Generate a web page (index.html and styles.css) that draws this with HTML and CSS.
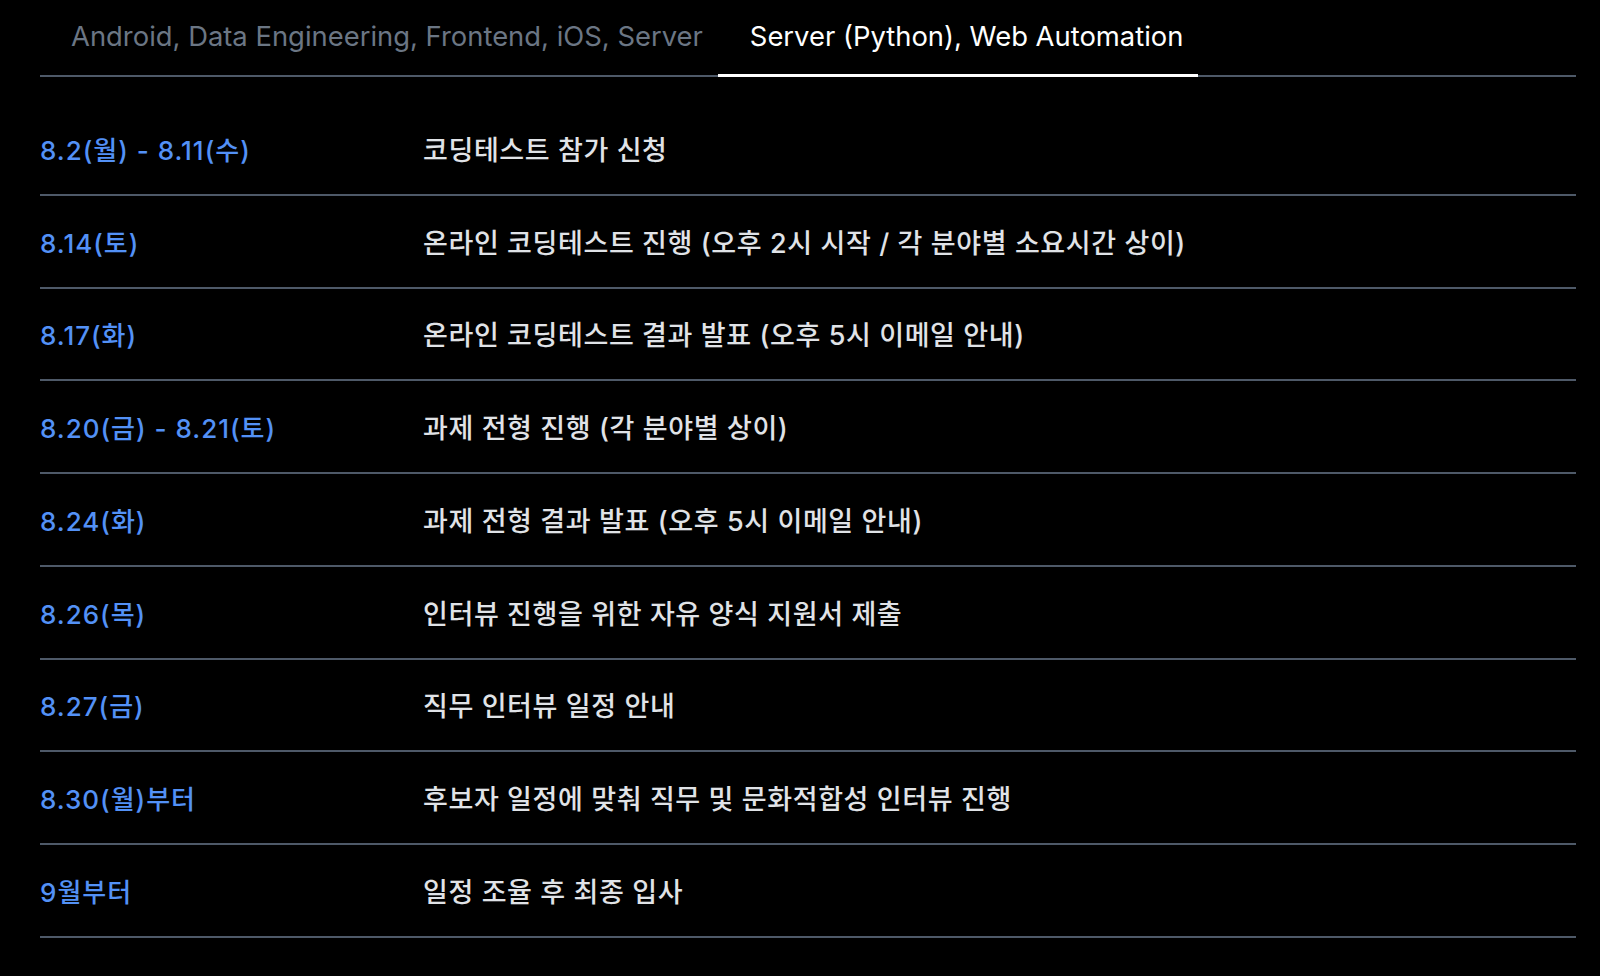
FILE: index.html
```html
<!DOCTYPE html>
<html lang="ko">
<head>
<meta charset="utf-8">
<title>일정</title>
<link rel="stylesheet" href="styles.css">
</head>
<body>
<main class="page">
  <nav class="tabs">
    <div class="tab">Android, Data Engineering, Frontend, iOS, Server</div>
    <div class="tab tab-active">Server (Python), Web Automation</div>
  </nav>
  <ul class="schedule">
    <li class="row"><span class="date">8.2(월) - 8.11(수)</span><span class="desc">코딩테스트 참가 신청</span></li>
    <li class="row"><span class="date">8.14(토)</span><span class="desc">온라인 코딩테스트 진행 (오후 2시 시작 / 각 분야별 소요시간 상이)</span></li>
    <li class="row"><span class="date">8.17(화)</span><span class="desc">온라인 코딩테스트 결과 발표 (오후 5시 이메일 안내)</span></li>
    <li class="row"><span class="date">8.20(금) - 8.21(토)</span><span class="desc">과제 전형 진행 (각 분야별 상이)</span></li>
    <li class="row"><span class="date">8.24(화)</span><span class="desc">과제 전형 결과 발표 (오후 5시 이메일 안내)</span></li>
    <li class="row"><span class="date">8.26(목)</span><span class="desc">인터뷰 진행을 위한 자유 양식 지원서 제출</span></li>
    <li class="row"><span class="date">8.27(금)</span><span class="desc">직무 인터뷰 일정 안내</span></li>
    <li class="row"><span class="date">8.30(월)부터</span><span class="desc">후보자 일정에 맞춰 직무 및 문화적합성 인터뷰 진행</span></li>
    <li class="row"><span class="date">9월부터</span><span class="desc">일정 조율 후 최종 입사</span></li>
  </ul>
</main>
</body>
</html>
```

FILE: styles.css
```css
html, body {
  margin: 0;
  padding: 0;
  background: #000;
}

body {
  font-family: "Inter", "Noto Sans CJK KR", sans-serif;
  -webkit-font-smoothing: antialiased;
}

.page {
  padding: 0 24px 0 40px;
}

.tabs {
  display: flex;
  border-bottom: 2px solid #4e5968;
  height: 75px;
}

.tab {
  padding: 0 15px 0 31px;
  font-size: 27.4px;
  line-height: 73px;
  color: #6b7684;
  white-space: nowrap;
}

.tab-active {
  padding: 0 15px 0 32px;
  color: #fff;
  border-bottom: 3px solid #fff;
  margin-bottom: -2px;
}

.schedule {
  list-style: none;
  margin: 0;
  padding: 26px 0 0;
}

.row {
  display: flex;
  align-items: center;
  padding: 26px 0;
  height: 38.75px;
  border-bottom: 2px solid #4e5968;
  font-size: 26px;
  font-weight: 500;
  letter-spacing: 1px;
}

.date {
  width: 383px;
  flex: none;
  color: #5391f6;
}

.desc {
  color: #e0e3e7;
  font-size: 27px;
  letter-spacing: 0.6px;
}
```
